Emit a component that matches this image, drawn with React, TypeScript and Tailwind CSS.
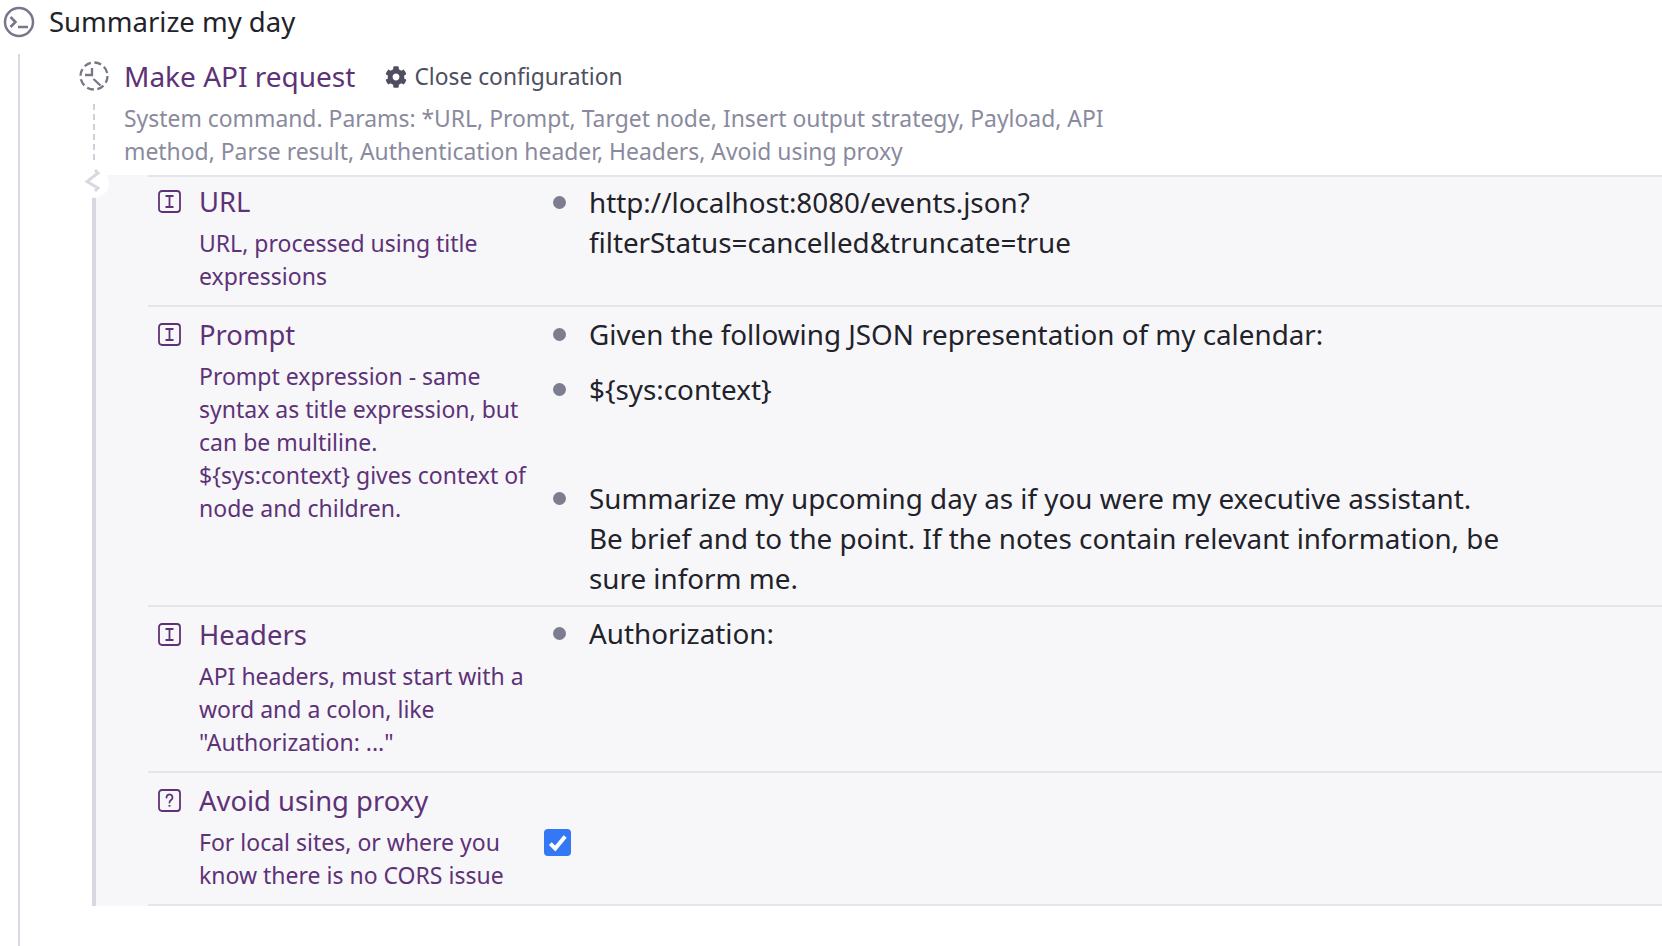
import React from 'react';
import { FaCog } from 'react-icons/fa';

const font = { fontFamily: '"Noto Sans", sans-serif' };

const InputIcon = ({ q }: { q?: boolean }) => (
  <svg width="23" height="23" viewBox="0 0 23 23" fill="none" stroke="#5e3277" strokeWidth="1.8" className="shrink-0">
    <rect x="1" y="1" width="21" height="21" rx="3" />
    {q ? (
      <>
        <path d="M8.5 8.5a3 3 0 1 1 4.6 2.5c-1 .7-1.6 1.2-1.6 2.5" strokeLinecap="round" />
        <path d="M11.5 16v1.6" strokeWidth="2" />
      </>
    ) : (
      <path d="M7.5 6h8M7.5 17h8M11.5 6v11" />
    )}
  </svg>
);

const Row = ({
  label,
  desc,
  q,
  first,
  className,
  children,
}: {
  label: string;
  desc: React.ReactNode;
  q?: boolean;
  first?: boolean;
  className: string;
  children: React.ReactNode;
}) => (
  <div className={`flex border-b-2 border-[#e4e4ea] ${className}`}>
    <div className={`w-[51px] pl-[10px] ${first ? 'pt-[13px]' : 'pt-[16px]'}`}>
      <InputIcon q={q} />
    </div>
    <div className={`w-[345px] ${first ? 'pt-[6px]' : 'pt-[9px]'}`}>
      <div className="text-[27.4px] leading-[38px] text-[#5e3277]">{label}</div>
      <div className="mt-[6px] text-[23px] leading-[33px] text-[#5e3277]">{desc}</div>
    </div>
    <div className="flex-1">{children}</div>
  </div>
);

const Bullet = ({ className, children }: { className?: string; children: React.ReactNode }) => (
  <div className={`flex text-[27.8px] leading-[40px] text-[#22222a] ${className ?? ''}`}>
    <div className="w-[45px] pl-[9px] pt-[14px]">
      <div className="h-[13px] w-[13px] rounded-full bg-[#7d7d90]" />
    </div>
    <div className="w-[915px]">{children}</div>
  </div>
);

export default function App() {
  return (
    <div className="h-[946px] w-[1662px] overflow-hidden bg-white" style={font}>
      <div className="flex h-[44px] items-center pl-[3px]">
        <svg width="32" height="32" viewBox="0 0 32 32" fill="none" stroke="#77778a" strokeWidth="2.5">
          <circle cx="16" cy="16" r="14" />
          <path d="M7.5 11l5 5-5 5M15 21h10" />
        </svg>
        <span className="ml-[14px] text-[27.5px] leading-[40px] text-[#22222a]">Summarize my day</span>
      </div>

      <div className="ml-[18px] mt-[10px] h-[892px] border-l-2 border-[#d8d8e2]">
        <div className="ml-[59px] flex h-[44px] items-center">
          <svg width="30" height="30" viewBox="0 0 30 30" fill="none" stroke="#77778a" strokeWidth="2.3">
            <circle cx="15" cy="15" r="13.5" strokeDasharray="7 3.6" />
            <path d="M13 7v7H6M14.5 18l7 6.5" />
          </svg>
          <span className="ml-[15px] text-[28px] leading-[40px] text-[#5e3277]">Make API request</span>
          <span className="ml-[30px] flex items-center pt-[2px] text-[22.8px] text-[#4e4e60]">
            <FaCog size={22} color="#4e4e60" />
            <span className="ml-[7px]">Close configuration</span>
          </span>
        </div>

        <div className="relative ml-[104px] mt-[4px] h-[66px] w-[990px] text-[22.9px] leading-[33px] text-[#8a8a9e]">
          <div className="absolute left-[-31px] top-[2px] h-[56px] border-l-2 border-dashed border-[#d0d0da]" />
          System command. Params: *URL, Prompt, Target node, Insert output strategy, Payload, API method, Parse result, Authentication header, Headers, Avoid using proxy
        </div>

        <div className="relative ml-[72px] mt-[7px] border-l-[4px] border-[#d8d8e2] bg-[#f7f7fa]">
          {/* collapse notch on the top of the bar */}
          <svg width="34" height="36" viewBox="0 0 34 36" fill="none" className="absolute left-[-15px] top-[-8px]">
            <circle cx="13" cy="16" r="15" fill="white" />
            <path d="M14 3l3 3-11 8.5 11 6.5-3 3" stroke="#d8d8e2" strokeWidth="3" />
          </svg>
          <div className="ml-[52px]">
            <div className="h-[2px] bg-[#e4e4ea]" />
            <Row first label="URL" desc={<>URL, processed using title<br />expressions</>} className="h-[130px]">
              <Bullet className="pt-[5px]">http://localhost:8080/events.json?<br />filterStatus=cancelled&amp;truncate=true</Bullet>
            </Row>
            <Row
              label="Prompt"
              desc={<>Prompt expression - same<br />syntax as title expression, but<br />can be multiline.<br />{'${sys:context}'} gives context of<br />node and children.</>}
              className="h-[300px]"
            >
              <Bullet className="pt-[7px]">Given the following JSON representation of my calendar:</Bullet>
              <Bullet className="mt-[15px]">{'${sys:context}'}</Bullet>
              <Bullet className="mt-[69px]">Summarize my upcoming day as if you were my executive assistant. Be brief and to the point. If the notes contain relevant information, be sure inform me.</Bullet>
            </Row>
            <Row label="Headers" desc={<>API headers, must start with a<br />word and a colon, like<br />"Authorization: ..."</>} className="h-[166px]">
              <Bullet className="pt-[6px]">Authorization:</Bullet>
            </Row>
            <Row q label="Avoid using proxy" desc={<>For local sites, or where you<br />know there is no CORS issue</>} className="h-[133px]">
              <div className="mt-[56px] flex h-[27px] w-[27px] items-center justify-center rounded-[4px] bg-[#3478f6]">
                <svg width="22" height="22" viewBox="0 0 20 20" fill="none" stroke="white" strokeWidth="3.6">
                  <path d="M3 10.5l4.5 4.5 9-11" />
                </svg>
              </div>
            </Row>
          </div>
        </div>
      </div>
    </div>
  );
}
